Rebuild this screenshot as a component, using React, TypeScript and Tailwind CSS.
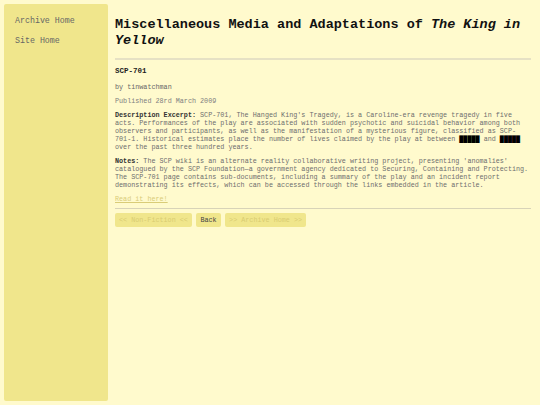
import React from "react";

const mono = { fontFamily: '"Liberation Mono", "Courier New", monospace' };

export default function App() {
  return (
    <div
      className="min-h-[405px] w-[540px] bg-[#fffacd] flex items-stretch p-[4px] gap-[7px]"
      style={mono}
    >
      <aside className="w-[104px] shrink-0 h-[397px] bg-[#f0e68c] rounded-[2px] pl-[11px] pt-[11px] flex flex-col gap-[8px]">
        <a className="text-[8.3px] leading-[12px] text-[#666]">Archive Home</a>
        <a className="text-[8.3px] leading-[12px] text-[#666]">Site Home</a>
      </aside>
      <main className="w-[416px] pt-[13px] text-[#666]">
        <h1 className="text-[13.5px] leading-[16px] font-bold text-[#111]">
          Miscellaneous Media and Adaptations of <i>The King in Yellow</i>
        </h1>
        <hr className="mt-[9px] border-0 border-t-2 border-[#e6e1c4]" />
        <h2 className="mt-[7px] text-[7.5px] leading-[9px] font-bold text-[#222]">SCP-701</h2>
        <p className="mt-[7px] text-[6.75px] leading-[8px] text-[#666]">by tinwatchman</p>
        <p className="mt-[6px] text-[6.75px] leading-[8px] text-[#808080]">Published 28rd March 2009</p>
        <p className="mt-[6px] text-[6.75px] leading-[8px] text-[#6e6e6e]">
          <b className="text-[#333]">Description Excerpt:</b> SCP-701, The Hanged King's Tragedy, is a
          Caroline-era revenge tragedy in five acts. Performances of the play are associated with sudden
          psychotic and suicidal behavior among both observers and participants, as well as the
          manifestation of a mysterious figure, classified as SCP-701-1. Historical estimates place the
          number of lives claimed by the play at between <span className="text-black">█████</span> and{" "}
          <span className="text-black">█████</span> over the past three hundred years.
        </p>
        <p className="mt-[6px] text-[6.75px] leading-[8px] text-[#6e6e6e]">
          <b className="text-[#333]">Notes:</b> The SCP wiki is an alternate reality collaborative writing
          project, presenting 'anomalies' catalogued by the SCP Foundation—a government agency dedicated to
          Securing, Containing and Protecting. The SCP-701 page contains sub-documents, including a summary
          of the play and an incident report demonstrating its effects, which can be accessed through the
          links embedded in the article.
        </p>
        <p className="mt-[6px] text-[6.75px] leading-[8px]">
          <a className="text-[#d9cc78] underline">Read it here!</a>
        </p>
        <hr className="mt-[5px] border-0 border-t-[1.5px] border-[#d8d3b8]" />
        <div className="mt-[4px] flex gap-[4.5px]">
          <span className="h-[14px] px-[4px] rounded-[2px] bg-[#f0e68c] text-[6.75px] leading-[14px] text-[#d8cc72]">
            &lt;&lt; Non-Fiction &lt;&lt;
          </span>
          <span className="h-[14px] px-[4px] rounded-[2px] bg-[#f0e68c] text-[6.75px] leading-[14px] text-[#444]">
            Back
          </span>
          <span className="h-[14px] px-[4px] rounded-[2px] bg-[#f0e68c] text-[6.75px] leading-[14px] text-[#d8cc72]">
            &gt;&gt; Archive Home &gt;&gt;
          </span>
        </div>
      </main>
    </div>
  );
}
